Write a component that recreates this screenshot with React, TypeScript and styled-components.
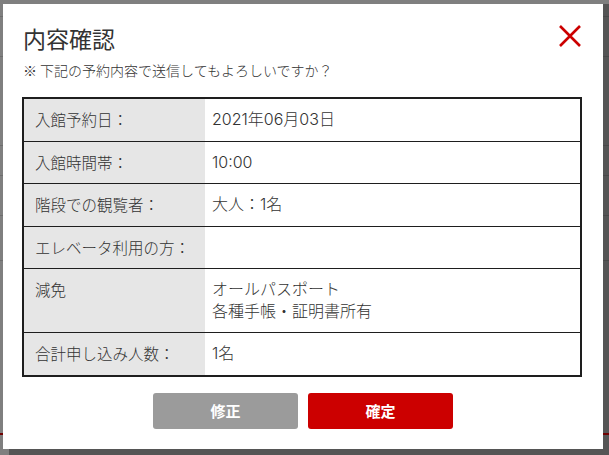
import React from "react";
import styled, { createGlobalStyle } from "styled-components";

const GlobalStyle = createGlobalStyle`
  * { box-sizing: border-box; }
  html, body { margin: 0; padding: 0; }
  body {
    font-family: "Noto Sans CJK JP", "Noto Sans", sans-serif;
    color: #333;
    background: #fff;
  }
`;

const Page = styled.div`
  min-height: 455px;
  display: flex;
  flex-direction: column;
  background: #fff;
`;

const TopBand = styled.div`
  height: 4px;
`;

const PageBody = styled.div`
  flex: 1;
  display: flex;
  flex-direction: column;
  background: linear-gradient(90deg, #fff 0 9px, #aaa 9px);
`;

const PageRow = styled.div<{ $h: number; $accent?: boolean }>`
  height: ${(p) => p.$h}px;
  border-bottom: ${(p) => (p.$accent ? "2px solid #e00000" : "1px solid rgba(0,0,0,0.14)")};
`;

const Overlay = styled.div`
  position: fixed;
  inset: 0;
  background: rgba(0, 0, 0, 0.5);
  padding: 4px 0 0 3px;
`;

const Modal = styled.div`
  width: 600px;
  background: #fff;
  padding: 19px 21px 20px 19px;
`;

const Header = styled.div`
  display: flex;
  justify-content: space-between;
  align-items: flex-start;
`;

const Title = styled.h1`
  margin: 0;
  font-size: 23px;
  line-height: 30px;
  font-weight: 400;
  color: #333;
  padding-left: 1px;
`;

const CloseButton = styled.button`
  margin-top: 2px;
  margin-right: 1px;
  width: 22px;
  height: 22px;
  padding: 0;
  border: 0;
  background: transparent;
  cursor: pointer;
  display: block;
`;

const Lead = styled.p`
  margin: 7px 0 0;
  font-size: 14px;
  line-height: 20px;
  font-weight: 300;
  color: #333;
  padding-left: 1px;
`;

const Table = styled.div`
  margin-top: 17px;
  border: 2px solid #1e1e1e;
  display: flex;
  flex-direction: column;
`;

const Row = styled.div`
  display: grid;
  grid-template-columns: 181px 1fr;
  & + & {
    border-top: 1px solid #1e1e1e;
  }
`;

const Cell = styled.div<{ $head?: boolean }>`
  font-family: ${(p) => (p.$head ? `"Noto Sans CJK JP", sans-serif` : `Inter, "Noto Sans CJK JP", sans-serif`)};
  font-size: ${(p) => (p.$head ? "15.5px" : "16px")};
  font-weight: 300;
  line-height: 21.5px;
  padding: 10px ${(p) => (p.$head ? "11px" : "7px")};
  background: ${(p) => (p.$head ? "#e6e6e6" : "#fff")};
  color: #333;
  white-space: pre-line;
`;

const Actions = styled.div`
  margin-top: 16px;
  display: flex;
  justify-content: center;
  gap: 10px;
  padding-left: 2px;
`;

const ActionButton = styled.button<{ $primary?: boolean }>`
  width: 145px;
  height: 36px;
  border: 0;
  border-radius: 3px;
  background: ${(p) => (p.$primary ? "#cc0000" : "#9b9b9b")};
  color: #fff;
  font-family: "Noto Sans CJK JP", sans-serif;
  font-size: 15px;
  font-weight: 700;
  cursor: pointer;
`;

const rows: [string, string][] = [
  ["入館予約日：", "2021年06月03日"],
  ["入館時間帯：", "10:00"],
  ["階段での観覧者：", "大人：1名"],
  ["エレベータ利用の方：", ""],
  ["減免", "オールパスポート\n各種手帳・証明書所有"],
  ["合計申し込み人数：", "1名"],
];

const bgRows = [13, 40, 89, 30, 40, 45, 174];

export default function App() {
  return (
    <>
      <GlobalStyle />
      <Page>
        <TopBand />
        <PageBody>
          {bgRows.map((h, i) => (
            <PageRow key={i} $h={h} $accent={i === bgRows.length - 1} />
          ))}
        </PageBody>
      </Page>
      <Overlay>
        <Modal>
          <Header>
            <Title>内容確認</Title>
            <CloseButton aria-label="閉じる">
              <svg width="22" height="22" viewBox="0 0 22 22">
                <path d="M1 1 L21 21 M21 1 L1 21" stroke="#cc0000" strokeWidth="2.6" fill="none" />
              </svg>
            </CloseButton>
          </Header>
          <Lead>※ 下記の予約内容で送信してもよろしいですか？</Lead>
          <Table>
            {rows.map(([k, v]) => (
              <Row key={k}>
                <Cell $head>{k}</Cell>
                <Cell>{v}</Cell>
              </Row>
            ))}
          </Table>
          <Actions>
            <ActionButton>修正</ActionButton>
            <ActionButton $primary>確定</ActionButton>
          </Actions>
        </Modal>
      </Overlay>
    </>
  );
}
